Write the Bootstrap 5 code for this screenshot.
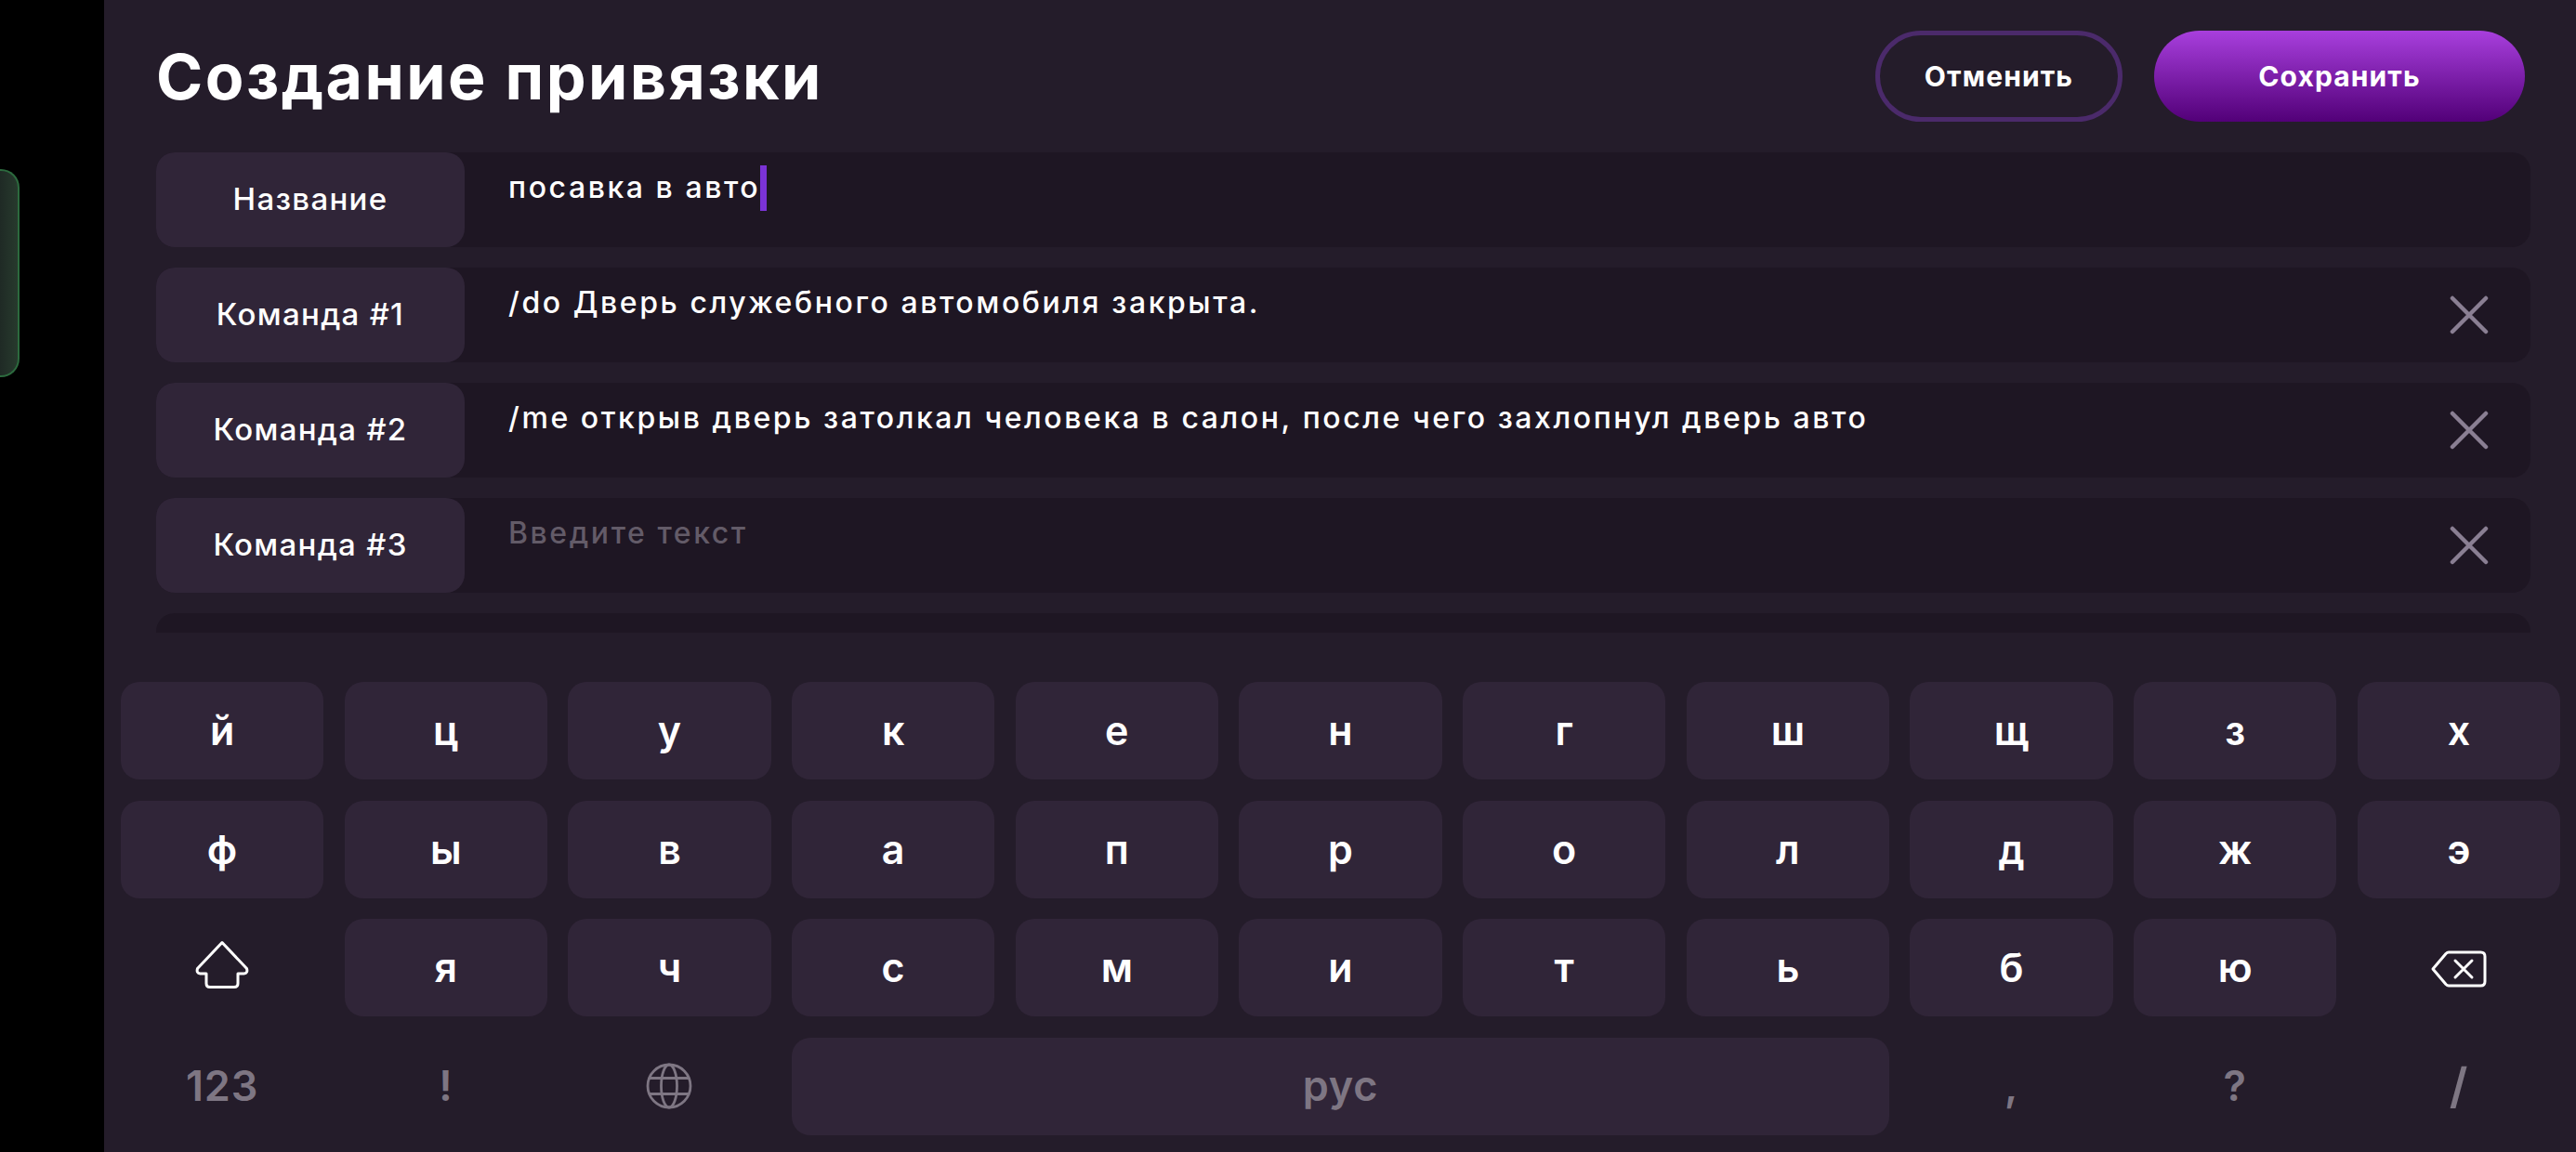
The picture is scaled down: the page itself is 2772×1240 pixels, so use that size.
<!DOCTYPE html>
<html lang="ru">
<head>
  <meta charset="UTF-8" />
  <meta name="viewport" content="width=device-width, initial-scale=1.0" />
  <title>Создание привязки</title>
  <link rel="stylesheet" href="https://cdn.jsdelivr.net/npm/bootstrap@5.3.2/dist/css/bootstrap.min.css">
  <style>
    body {
      background: #000;
      font-family: Inter, "Open Sans", sans-serif;
      height: 1240px;
    }
    .side { width: 112px; padding-top: 182px; }
    .side-tab {
      width: 21px;
      height: 224px;
      background: linear-gradient(90deg, #1f2a25, #273a2d);
      border: 2px solid #2c6a3e;
      border-left: 0;
      border-radius: 0 20px 20px 0;
    }
    .panel { background: #241c2a; }
    .topbar { height: 164px; padding: 33px 55px 33px 56px; }
    .page-title { font-size: 68px; font-weight: 700; line-height: 98px; letter-spacing: 2.45px; }
    .actions { gap: 34px; }
    .btn-pill {
      --bs-btn-color: #fff;
      --bs-btn-hover-color: #fff;
      height: 98px;
      border-radius: 49px;
      font-size: 30px;
      font-weight: 700;
      letter-spacing: 1.1px;
    }
    .btn-cancel { width: 266px; border: 5px solid #4b2a6b; }
    .btn-save { width: 399px; border: 0; background: linear-gradient(#a83fdd, #520078); }

    .binds { height: 517px; padding: 0 49px 0 56px; gap: 22px; }
    .bind { height: 102px; border-radius: 20px; background: #1e1623; padding-right: 45px; }
    .bind-label {
      width: 332px;
      border-radius: 20px;
      background: #302538;
      font-size: 33px;
      font-weight: 500;
      letter-spacing: 1.3px;
    }
    .bind-text { font-size: 32px; font-weight: 500; line-height: 47px; letter-spacing: 2.57px; padding: 14px 0 0 47px; }
    .bind-text.empty { color: #635b68; }
    .caret { width: 7px; height: 49px; background: #7b33d6; }

    .keys {
      display: grid;
      grid-template-columns: repeat(11, 1fr);
      grid-auto-rows: 105px;
      gap: 22.5px;
      padding: 53px 17px 0 18px;
    }
    .key { border-radius: 20px; background: #302538; font-size: 43px; font-weight: 600; }
    .key.bare { background: none; }
    .key.dim { color: #7e7683; font-size: 45px; letter-spacing: 0.8px; }
    .key.space { grid-column: span 5; }
    .key.slash { font-size: 52px; }
  </style>
</head>
<body class="d-flex overflow-hidden text-white">
  <aside class="side flex-shrink-0">
    <div class="side-tab"></div>
  </aside>

  <main class="panel flex-grow-1">
    <header class="topbar d-flex justify-content-between">
      <h1 class="page-title m-0">Создание привязки</h1>
      <div class="actions d-flex">
        <button class="btn btn-pill btn-cancel">Отменить</button>
        <button class="btn btn-pill btn-save">Сохранить</button>
      </div>
    </header>

    <section class="binds d-flex flex-column overflow-hidden" id="binds"></section>
    <section class="keys" id="keys"></section>
  </main>

  <script src="https://cdn.jsdelivr.net/npm/bootstrap@5.3.2/dist/js/bootstrap.bundle.min.js"></script>
  <script>
    const binds = [
      { label: 'Название', text: 'посавка в авто', focused: true },
      { label: 'Команда #1', text: '/do Дверь служебного автомобиля закрыта.' },
      { label: 'Команда #2', text: '/me открыв дверь затолкал человека в салон, после чего захлопнул дверь авто' },
      { label: 'Команда #3', text: '' }
    ];

    const closeIcon = '<svg width="42" height="42" viewBox="0 0 42 42" fill="none" stroke="#8a7f93" stroke-width="4.5" stroke-linecap="round"><path d="M3 3l36 36M39 3L3 39"/></svg>';
    const icons = {
      shift: '<svg width="60" height="60" viewBox="0 0 60 60" fill="none" stroke="#fff" stroke-width="3" stroke-linejoin="round"><path d="M30 2.500L56.500 30.500q1.500 5-3 5.500H47V46.500q0 4-4 4H17q-4 0-4-4V36H6.500q-4.500-.5-3-5.500z"/></svg>',
      back: '<svg width="60" height="44" viewBox="0 0 60 44" fill="none" stroke="#fff" stroke-width="3" stroke-linecap="round" stroke-linejoin="round"><path d="M2 23L16 6.500Q17.500 5 19 5H53.500Q58 5 58 9.500V36.500Q58 41 53.500 41H19Q17.500 41 16 39.500z"/><path d="M26 14l18 18M44 14L26 32"/></svg>',
      globe: '<svg width="50" height="50" viewBox="0 0 50 50" fill="none" stroke="#7e7683" stroke-width="2.800"><circle cx="25" cy="25" r="23"/><ellipse cx="25" cy="25" rx="8.500" ry="23"/><path d="M4 16.500H46M4 33.500H46"/></svg>'
    };

    document.getElementById('binds').innerHTML = binds.map(b => `
      <div class="bind d-flex flex-shrink-0">
        <div class="bind-label d-flex align-items-center justify-content-center">${b.label}</div>
        <div class="bind-text d-flex flex-grow-1 text-nowrap ${b.text ? '' : 'empty'}">${b.text || 'Введите текст'}${b.focused ? '<span class="caret"></span>' : ''}</div>
        ${b.focused ? '' : `<div class="d-flex align-items-center">${closeIcon}</div>`}
      </div>`).join('') + '<div class="bind flex-shrink-0"></div>';

    const rows = [
      [...'йцукенгшщзх'],
      [...'фывапролджэ'],
      ['shift', ...'ячсмитьбю', 'back'],
      ['123', '!', 'globe', 'рус', ',', '?', '/']
    ];

    document.getElementById('keys').innerHTML = rows.map((row, r) => row.map(k => {
      const classes = ['key', 'd-flex', 'align-items-center', 'justify-content-center'];
      if (icons[k] || (r === 3 && k !== 'рус')) classes.push('bare');
      if (r === 3) classes.push('dim');
      if (k === 'рус') classes.push('space');
      if (k === '/') classes.push('slash');
      return `<div class="${classes.join(' ')}">${icons[k] || k}</div>`;
    }).join('')).join('');
  </script>
</body>
</html>
